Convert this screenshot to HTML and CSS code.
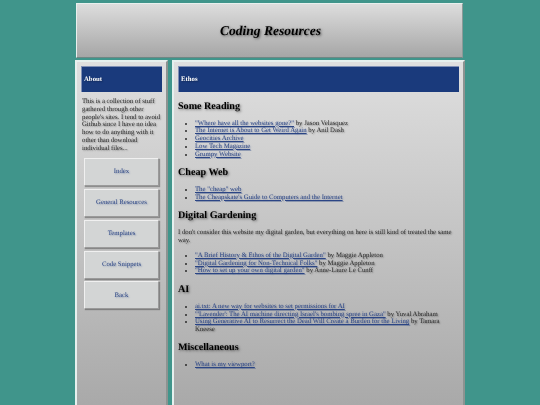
FILE: index.html
```html
<!DOCTYPE html>
<html lang="en">
<head>
    <meta charset="UTF-8">
    <meta name="viewport" content="width=device-width, initial-scale=1.0">
    <title>Coding Resources</title>
    <link rel="stylesheet" href="styles.css">
</head>
<body>

<div class="container">
    <header class="site-header">
        <h1>Coding Resources</h1>
    </header>

    <div class="columns">
        <aside class="sidebar">
            <div class="title-bar">About</div>
            <p class="about">This is a collection of stuff gathered through other people's sites. I tend to avoid Github since I have no idea how to do anything with it other than download individual files...</p>
            <nav class="nav">
                <a href="#">Index</a>
                <a href="#">General Resources</a>
                <a href="#">Templates</a>
                <a href="#">Code Snippets</a>
                <a href="#">Back</a>
            </nav>
        </aside>

        <main class="content">
            <div class="title-bar">Ethos</div>

            <h2>Some Reading</h2>
            <ul>
                <li><a href="#">"Where have all the websites gone?"</a> by Jason Velasquez</li>
                <li><a href="#">The Internet is About to Get Weird Again</a> by Anil Dash</li>
                <li><a href="#">Geocities Archive</a></li>
                <li><a href="#">Low Tech Magazine</a></li>
                <li><a href="#">Grumpy Website</a></li>
            </ul>

            <h2>Cheap Web</h2>
            <ul>
                <li><a href="#">The "cheap" web</a></li>
                <li><a href="#">The Cheapskate's Guide to Computers and the Internet</a></li>
            </ul>

            <h2>Digital Gardening</h2>
            <p>I don't consider this website my digital garden, but everything on here is still kind of treated the same way.</p>
            <ul>
                <li><a href="#">"A Brief History &amp; Ethos of the Digital Garden"</a> by Maggie Appleton</li>
                <li><a href="#">"Digital Gardening for Non-Technical Folks"</a> by Maggie Appleton</li>
                <li><a href="#">"How to set up your own digital garden"</a> by Anne-Laure Le Cunff</li>
            </ul>

            <h2>AI</h2>
            <ul>
                <li><a href="#">ai.txt: A new way for websites to set permissions for AI</a></li>
                <li><a href="#">"'Lavender': The AI machine directing Israel's bombing spree in Gaza"</a> by Yuval Abraham</li>
                <li><a href="#">Using Generative AI to Resurrect the Dead Will Create a Burden for the Living</a> by Tamara Kneese</li>
            </ul>

            <h2>Miscellaneous</h2>
            <ul>
                <li><a href="#">What is my viewport?</a></li>
            </ul>
        </main>
    </div>
</div>

</body>
</html>
```

FILE: styles.css
```css
html, body {
    height: 100%;
    overflow: hidden;
}
body {
    margin: 0;
    background-color: #40958b;
    font-family: "Liberation Serif", "Times New Roman", serif;
    font-size: 6.75px;
    line-height: 7.75px;
    color: #2a2a2a;
    text-rendering: geometricPrecision;
    text-shadow: 1px 1px 1.5px rgba(0,0,0,0.35);
}
/* the reference is a scaled-down shot, so everything is a little soft */
.container {
    width: 390px;
    height: 405px;
    margin-left: 75px;
    padding-top: 3px;
    box-sizing: border-box;
    display: flex;
    flex-direction: column;
    filter: blur(0.4px);
}
.site-header {
    height: 55px;
    margin: 0 2px 0 1px;
    padding-left: 2px;
    box-sizing: border-box;
    display: flex;
    align-items: center;
    justify-content: center;
    border: 1px solid;
    border-color: #e8f0ee #8a9a98 #6f8784 #e8f0ee;
    background: linear-gradient(#dddddd, #a6a6a6);
}
h1 {
    margin: 0;
    font-size: 13.5px;
    line-height: 16px;
    font-style: italic;
    color: #000;
    text-shadow: 1px 1px 2.5px rgba(0,0,0,0.55);
}
.columns {
    flex: 1;
    display: flex;
    gap: 4px;
    margin-top: 2px;
    min-height: 0;
}
.sidebar, .content {
    box-sizing: border-box;
    border: 2px solid;
    border-color: #e6f0ee #8c9391 #8c9391 #e6f0ee;
    border-bottom-width: 0;
    padding: 4px;
    background: linear-gradient(#dfdfdf, #a9a9a9);
}
.sidebar {
    width: 93px;
}
.content {
    flex: 1;
    min-width: 0;
}
.title-bar {
    height: 26px;
    margin-bottom: 1px;
    box-sizing: border-box;
    display: flex;
    align-items: center;
    padding-left: 2px;
    background-color: #1a3a7c;
    border-top: 1px solid #7f8fb5;
    border-left: 1px solid #7f8fb5;
    color: #fff;
    font-weight: bold;
    text-shadow: 1px 1px 1.5px rgba(0,0,0,0.3);
}
.about {
    margin: 6px 1px 0;
}
.nav {
    display: flex;
    flex-direction: column;
    gap: 2.8px;
    margin: 6px 3px 0;
}
.nav a {
    height: 28px;
    box-sizing: border-box;
    display: flex;
    align-items: center;
    justify-content: center;
    border: 1px solid;
    border-color: #f0f0f0 #9a9a9a #9a9a9a #f0f0f0;
    background-color: #d3d5d5;
    box-shadow: 1px 1px 1px rgba(0,0,0,0.3);
    text-decoration: none;
}
a {
    color: #2b4585;
    text-shadow: 1px 1px 1.5px rgba(26,58,124,0.35);
}
h2 {
    margin: 8.6px 0 8.1px;
    font-size: 10.1px;
    line-height: 11px;
    color: #000;
    text-shadow: 1px 1px 2.5px rgba(0,0,0,0.55);
}
.content p {
    margin: 0 0 7px;
}
ul {
    margin: 0;
    padding-left: 17px;
}
```
